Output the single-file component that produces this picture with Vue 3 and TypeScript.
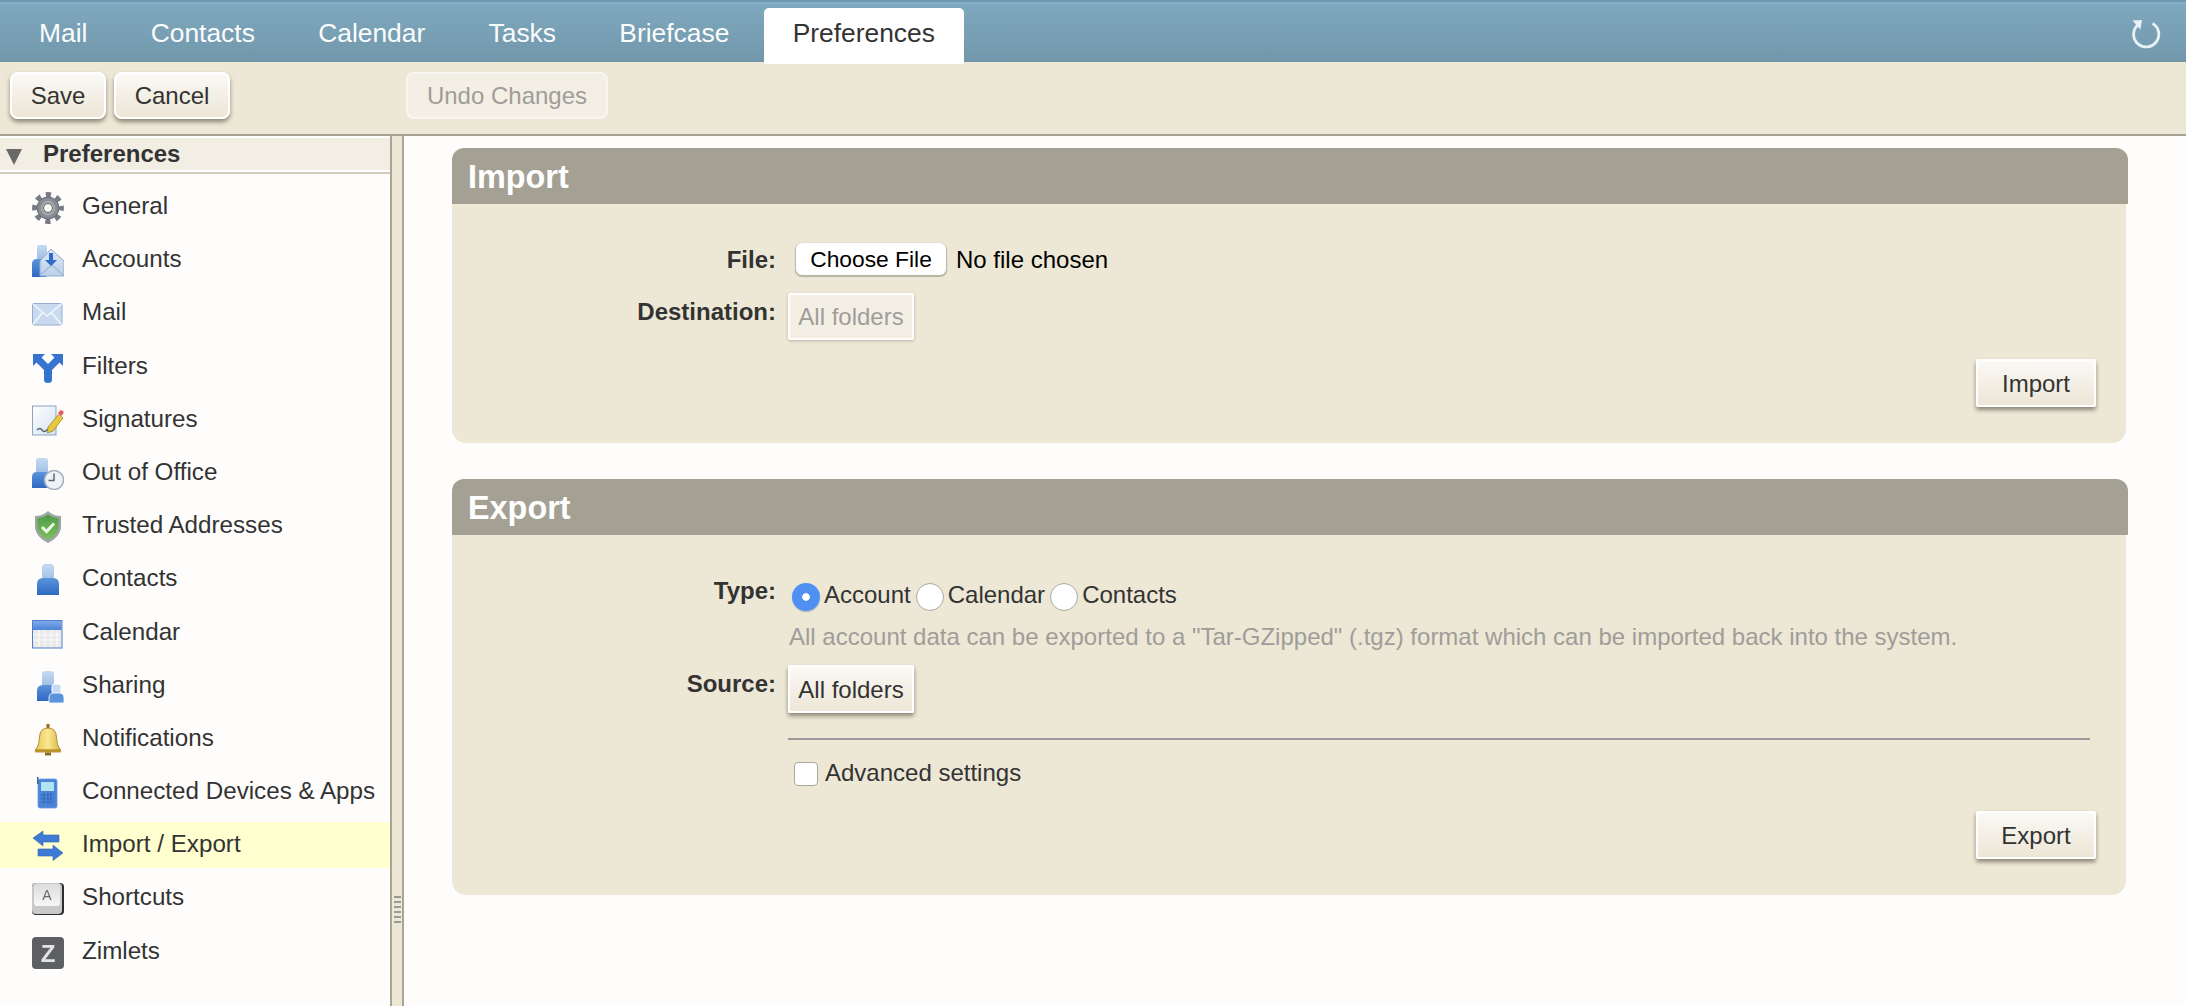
<script setup lang="ts">
const tabs: string[] = ['Mail', 'Contacts', 'Calendar', 'Tasks', 'Briefcase', 'Preferences']
const items: { key: string; label: string }[] = [
  { key: 'general', label: 'General' },
  { key: 'accounts', label: 'Accounts' },
  { key: 'mail', label: 'Mail' },
  { key: 'filters', label: 'Filters' },
  { key: 'signatures', label: 'Signatures' },
  { key: 'ooo', label: 'Out of Office' },
  { key: 'trusted', label: 'Trusted Addresses' },
  { key: 'contacts', label: 'Contacts' },
  { key: 'calendar', label: 'Calendar' },
  { key: 'sharing', label: 'Sharing' },
  { key: 'notifications', label: 'Notifications' },
  { key: 'devices', label: 'Connected Devices & Apps' },
  { key: 'importexport', label: 'Import / Export' },
  { key: 'shortcuts', label: 'Shortcuts' },
  { key: 'zimlets', label: 'Zimlets' },
]
</script>

<template>
  <div class="app">
    <svg class="defs" width="0" height="0" aria-hidden="true">
      <defs>
        <linearGradient id="gBody" x1="0" y1="0" x2="0" y2="1"><stop offset="0" stop-color="#5c93dd" /><stop offset="1" stop-color="#2f69c0" /></linearGradient>
        <linearGradient id="gHead" x1="0" y1="0" x2="0" y2="1"><stop offset="0" stop-color="#c6daf2" /><stop offset="1" stop-color="#9dbde6" /></linearGradient>
        <linearGradient id="gEnv" x1="0" y1="0" x2="0" y2="1"><stop offset="0" stop-color="#dfe9f6" /><stop offset="1" stop-color="#bcd0ea" /></linearGradient>
        <linearGradient id="gShield" x1="0" y1="0" x2="0" y2="1"><stop offset="0" stop-color="#4f9b46" /><stop offset="1" stop-color="#7cc05e" /></linearGradient>
        <linearGradient id="gBell" x1="0" y1="0" x2="1" y2="0"><stop offset="0" stop-color="#e9c65a" /><stop offset=".5" stop-color="#fbe88e" /><stop offset="1" stop-color="#d9b046" /></linearGradient>
        <linearGradient id="gKey" x1="0" y1="0" x2="0" y2="1"><stop offset="0" stop-color="#dcdcdc" /><stop offset="1" stop-color="#f7f7f7" /></linearGradient>
        <linearGradient id="gPage" x1="0" y1="0" x2="1" y2="1"><stop offset="0" stop-color="#ffffff" /><stop offset="1" stop-color="#d3e1f3" /></linearGradient>
        <linearGradient id="gCal" x1="0" y1="0" x2="0" y2="1"><stop offset="0" stop-color="#7fa9ea" /><stop offset="1" stop-color="#4d82d6" /></linearGradient>
      </defs>
    </svg>

    <header class="topbar">
      <nav class="tabs">
        <div v-for="t in tabs" :key="t" class="tab" :class="{ active: t === 'Preferences' }">{{ t }}</div>
      </nav>
      <svg class="refresh" width="32" height="32" viewBox="0 0 32 32" fill="none">
        <path d="M8.5 8.2 A12.6 12.6 0 1 0 23.5 6.4" stroke="#e8f1f5" stroke-width="2.8" />
        <path d="M3.5 3.5 L13 3 L11.4 12.5 Z" fill="#e8f1f5" />
      </svg>
    </header>

    <div class="toolbar">
      <div class="toolbar-left">
        <button class="btn round">Save</button>
        <button class="btn round cancel">Cancel</button>
      </div>
      <button class="btn round undo" disabled>Undo Changes</button>
    </div>

    <div class="main">
      <aside class="sidebar">
        <div class="side-head">
          <span class="tri"></span>
          <span>Preferences</span>
        </div>
        <ul class="list">
          <li v-for="it in items" :key="it.key" class="row" :class="{ selected: it.key === 'importexport' }">
            <svg class="ico" width="32" height="32" viewBox="0 0 32 32">
              <g v-if="it.key === 'general'">
                <circle cx="16" cy="16" r="13.2" fill="none" stroke="#777c82" stroke-width="5.4" stroke-dasharray="5.2 5.17" stroke-dashoffset="2.6" />
                <circle cx="16" cy="16" r="11" fill="#878c92" stroke="#6a6f75" />
                <circle cx="16" cy="16" r="7.5" fill="#a3a7ac" />
                <circle cx="16" cy="16" r="4.4" fill="#fdfdfb" stroke="#666" />
              </g>
              <g v-else-if="it.key === 'accounts'">
                <rect x="5" y="0" width="10" height="15" rx="2" fill="url(#gHead)" />
                <path d="M0 32 V19 Q0 14 5 14 H14 V32 Z" fill="url(#gBody)" />
                <path d="M8 31 V16 L19 4 L32 16 V31 Z" fill="url(#gEnv)" stroke="#8eaacd" stroke-width="1" />
                <path d="M8 30 L20 20 L31 30" fill="none" stroke="#9fb8d8" stroke-width="1.2" />
                <path d="M17 8 H21 V15 H25 L19 21 L13 15 H17 Z" fill="#2f6cc8" />
              </g>
              <g v-else-if="it.key === 'mail'">
                <rect x="0.5" y="5.5" width="29.5" height="21.5" rx="1.5" fill="#c9daf0" stroke="#93aece" />
                <path d="M1 6 L15 18 L29.5 6 M1 26.5 L11 14 M29.5 26.5 L19 14" fill="none" stroke="#f2f6fb" stroke-width="1.6" />
              </g>
              <g v-else-if="it.key === 'filters'">
                <path d="M1 2 H13 L9.5 5.5 L16 12 L22.5 5.5 L19 2 H31 V14 L27.5 10.5 L20 18 V28 Q20 31 16 31 Q12 31 12 28 V18 L4.5 10.5 L1 14 Z" fill="#3674d2" />
              </g>
              <g v-else-if="it.key === 'signatures'">
                <rect x="0.5" y="1" width="23.5" height="29" fill="url(#gPage)" stroke="#8ea3bf" />
                <path d="M5 25 Q8 22 10 25 T15 25 T19 25" fill="none" stroke="#58636f" stroke-width="1.4" />
                <path d="M16 22 L27 9 L31 13 L21 26 L15.5 28 Z" fill="#e7c83c" stroke="#8e7a25" stroke-width=".7" />
                <path d="M26 8 L28 5.5 Q30 4.5 31.5 6.5 Q32 8.5 30 10 L29 12 Z" fill="#e45a5a" stroke="#e8b0b0" stroke-width=".8" />
              </g>
              <g v-else-if="it.key === 'ooo'">
                <rect x="4" y="0" width="12" height="16" rx="2.5" fill="url(#gHead)" />
                <path d="M0 30 V19 Q0 14 5 14 H18 V30 Z" fill="url(#gBody)" />
                <circle cx="22" cy="22" r="9.5" fill="#eef1f5" stroke="#a3b1c2" stroke-width="1.6" />
                <path d="M22 15.5 V22.5 H16.5" fill="none" stroke="#5d6772" stroke-width="1.5" />
              </g>
              <g v-else-if="it.key === 'trusted'">
                <path d="M16 0 Q21 5 29 5 V17 Q28 26 16 32 Q4 26 3 17 V5 Q11 5 16 0 Z" fill="#9ea5a2" />
                <path d="M16 3.5 Q21 7 26.5 7.5 V17 Q25 24 16 28.5 Q7 24 5.5 17 V7.5 Q11 7 16 3.5 Z" fill="url(#gShield)" />
                <path d="M10 16 L14.5 20.5 L22 12.5" fill="none" stroke="#eef6ea" stroke-width="3" />
              </g>
              <g v-else-if="it.key === 'contacts'">
                <rect x="10.5" y="0.5" width="11" height="16" rx="3" fill="url(#gHead)" stroke="#9db8dc" stroke-width=".6" />
                <path d="M5 31 V20 Q5 14 11 14 H21 Q27 14 27 20 V31 Z" fill="url(#gBody)" />
              </g>
              <g v-else-if="it.key === 'calendar'">
                <rect x="0.5" y="2.5" width="29.5" height="27.5" fill="#e9e9e9" stroke="#4a7ed0" />
                <rect x="1" y="3" width="28.5" height="9" fill="url(#gCal)" />
                <path d="M7 12 V29 M13 12 V29 M19 12 V29 M25 12 V29 M1 17 H29 M1 22 H29" stroke="#fbfbfb" stroke-width="1.1" />
              </g>
              <g v-else-if="it.key === 'sharing'">
                <rect x="10" y="0" width="12" height="16" rx="3" fill="url(#gHead)" />
                <path d="M5 30 V20 Q5 14 11 14 H21 Q27 14 27 20 V30 Z" fill="url(#gBody)" />
                <rect x="20" y="13" width="9" height="10" rx="2.5" fill="#c6daf2" stroke="#fff" />
                <path d="M17 32 V27 Q17 22 22 22 H27 Q32 22 32 27 V32 Z" fill="#5c93dd" stroke="#fff" stroke-width=".8" />
              </g>
              <g v-else-if="it.key === 'notifications'">
                <rect x="14.5" y="0" width="3" height="5" fill="#8a6c1e" />
                <path d="M16 4 Q24 4 24.5 13 Q25 23 29 26 H3 Q7 23 7.5 13 Q8 4 16 4 Z" fill="url(#gBell)" stroke="#b28f35" />
                <rect x="3" y="25.5" width="26" height="3" rx="1" fill="#b9952f" />
                <rect x="13" y="28.5" width="6" height="3" fill="#8a6c1e" />
              </g>
              <g v-else-if="it.key === 'devices'">
                <rect x="6" y="2" width="19" height="29" rx="2" fill="#4a84d8" stroke="#6e9be0" stroke-width=".8" />
                <rect x="5" y="0" width="1.5" height="7" fill="#3c5f90" />
                <rect x="9" y="5" width="13" height="9" fill="#aee4f3" />
                <path d="M9 18 H22 M9 21.5 H22 M9 25 H22 M12 16 V28 M16 16 V28 M19 16 V28" stroke="#2e5ea8" stroke-width="1.2" stroke-dasharray="1.6 1.4" />
              </g>
              <g v-else-if="it.key === 'importexport'">
                <path d="M1 8 L11 1 V5 H27 V12 H11 V16 Z" fill="#3f7ad4" stroke="#2d63b6" stroke-width=".6" />
                <path d="M31 23 L21 30.5 V26 H6 V19 H21 V15 Z" fill="#3f7ad4" stroke="#2d63b6" stroke-width=".6" />
              </g>
              <g v-else-if="it.key === 'shortcuts'">
                <rect x="0" y="0" width="32" height="32" rx="4" fill="#2d2d2d" />
                <rect x="0" y="0" width="30" height="31" rx="4" fill="#c9c9c9" />
                <rect x="2" y="1" width="26" height="22" rx="3" fill="url(#gKey)" />
                <text x="15" y="17" font-size="14" text-anchor="middle" fill="#6a6a6a" class="glyph">A</text>
              </g>
              <g v-else-if="it.key === 'zimlets'">
                <rect x="0" y="0" width="32" height="32" rx="4" fill="#5e5f62" />
                <text x="16" y="25" font-size="24" font-weight="700" text-anchor="middle" fill="#e3e3e3" class="glyph">Z</text>
              </g>
            </svg>
            <span class="label">{{ it.label }}</span>
          </li>
        </ul>
      </aside>

      <div class="sash"><span class="grip"></span></div>

      <section class="content">
        <article class="panel import">
          <h2 class="panel-head">Import</h2>
          <div class="panel-body">
            <div class="form">
              <div class="flabel file-l">File:</div>
              <div class="field file">
                <button class="choose">Choose File</button>
                <span class="nofile">No file chosen</span>
              </div>
              <div class="flabel dest-l">Destination:</div>
              <div class="field">
                <button class="btn square off" disabled>All folders</button>
              </div>
            </div>
            <div class="actions"><button class="btn square act">Import</button></div>
          </div>
        </article>

        <article class="panel export">
          <h2 class="panel-head">Export</h2>
          <div class="panel-body">
            <div class="form">
              <div class="flabel type-l">Type:</div>
              <div class="field radios">
                <label class="opt"><input type="radio" name="type" checked /><span>Account</span></label>
                <label class="opt"><input type="radio" name="type" /><span>Calendar</span></label>
                <label class="opt"><input type="radio" name="type" /><span>Contacts</span></label>
              </div>
              <div></div>
              <div class="hint">All account data can be exported to a "Tar-GZipped" (.tgz) format which can be imported back into the system.</div>
              <div class="flabel src-l">Source:</div>
              <div class="field">
                <button class="btn square">All folders</button>
              </div>
              <div></div>
              <div class="sep"></div>
              <div></div>
              <label class="opt adv"><input type="checkbox" /><span>Advanced settings</span></label>
            </div>
            <div class="actions"><button class="btn square act">Export</button></div>
          </div>
        </article>
      </section>
    </div>
  </div>
</template>

<style>
html, body { margin: 0; padding: 0; background: #fefdfb; }
</style>

<style scoped>
.app {
  width: 2186px;
  height: 1006px;
  overflow: hidden;
  display: flex;
  flex-direction: column;
  font-family: "Liberation Sans", Arial, sans-serif;
  font-size: 24px;
  color: #333;
  background: #fefdfb;
}
.defs { position: absolute; }

.topbar {
  height: 62px;
  box-sizing: border-box;
  flex: none;
  display: flex;
  justify-content: space-between;
  align-items: flex-start;
  padding: 0 25px 0 10px;
  border-top: 2px solid #6b98b2;
  box-shadow: inset 0 2px 0 #88adc2;
  background: linear-gradient(#7fa9bf, #7297ab);
  position: relative;
  z-index: 1;
}
.tabs { display: flex; gap: 5.3px; margin-top: 6px; }
.tab {
  height: 56px;
  box-sizing: border-box;
  padding: 0 29px;
  font-size: 26.4px;
  line-height: 50px;
  color: #fbfcfc;
  border-radius: 5px 5px 0 0;
}
.tab.active { background: #fff; color: #333; }
.refresh { margin-top: 15px; }

.toolbar {
  height: 72px;
  box-sizing: border-box;
  flex: none;
  display: flex;
  padding: 10px 0 0 10px;
  background: #ede7d5;
}
.toolbar-left { width: 396px; display: flex; gap: 8px; }
.btn {
  font: inherit;
  color: #333;
  box-sizing: border-box;
  border: 2px solid #fff;
  background: linear-gradient(#fbf9f5, #ece6d6);
  box-shadow: 0 3px 4px rgba(60, 55, 45, 0.55);
  padding: 1px 0 0;
  height: 47px;
}
.btn.round { border-radius: 8px; width: 96px; }
.btn.round.cancel { width: 116px; }
.btn.round.undo {
  width: 202px;
  background: #f3efe5;
  color: #9f9d99;
  box-shadow: none;
  border-color: #f8f6f0;
}
.btn.square { border-radius: 2px; width: 126px; height: 48px; }
.btn.square.off {
  background: #f3efe5;
  color: #9f9d99;
  height: 47px;
  box-shadow: 0 1px 3px rgba(60, 55, 45, 0.3);
}
.btn.square.act { width: 120px; height: 48px; }

.main {
  flex: 1;
  display: flex;
  min-height: 0;
  border-top: 2px solid #a5a193;
}
.sidebar {
  width: 392px;
  box-sizing: border-box;
  flex: none;
  border-right: 2px solid #a9a494;
  background: #fefdfb;
}
.side-head {
  height: 36px;
  box-sizing: border-box;
  display: flex;
  align-items: center;
  border-top: 2px solid #fff;
  border-bottom: 2px solid #fff;
  box-shadow: 0 2px 0 #d2ccbd;
  background: #f2eee3;
  font-weight: 700;
  padding: 0 0 0 6px;
}
.tri {
  width: 0;
  height: 0;
  border-left: 8px solid transparent;
  border-right: 8px solid transparent;
  border-top: 16px solid #696969;
  margin: 6px 21px 0 0;
}
.list {
  list-style: none;
  margin: 0;
  padding: 12px 0 0;
  display: flex;
  flex-direction: column;
  gap: 7.2px;
}
.row {
  height: 46px;
  display: flex;
  align-items: center;
  padding-left: 32px;
}
.row.selected { background: #ffffcf; }
.ico { flex: none; margin-top: 2px; filter: blur(0.4px); }
.glyph { font-family: "Liberation Sans", Arial, sans-serif; }
.label { margin-left: 18px; margin-bottom: 2px; white-space: nowrap; font-size: 24.2px; }

.sash {
  width: 10px;
  flex: none;
  background: #ede7d5;
  border-right: 2px solid #a9a494;
  display: flex;
  justify-content: center;
  align-items: flex-start;
  box-sizing: content-box;
}
.grip {
  width: 7px;
  height: 27px;
  margin-top: 760px;
  background: repeating-linear-gradient(#9a9a94 0 2px, transparent 2px 5px);
}

.content {
  flex: 1;
  padding: 12px 60px 0 48px;
  background: #fefdfb;
  display: flex;
  flex-direction: column;
  gap: 36px;
}
.panel-head {
  margin: 0 -2px 0 0;
  height: 56px;
  box-sizing: border-box;
  background: #a4a194;
  color: #fff;
  font-size: 32.4px;
  font-weight: 700;
  line-height: 58px;
  padding-left: 16px;
  border-radius: 12px 12px 0 0;
}
.panel-body {
  background: #ede7d5;
  border-radius: 0 0 14px 14px;
  padding-right: 30px;
}
.import .panel-body { padding-top: 39px; padding-bottom: 36px; }
.export .panel-body { padding-top: 48px; padding-bottom: 36px; }

.form {
  display: grid;
  grid-template-columns: 324px 1fr;
  column-gap: 12px;
}
.flabel {
  text-align: right;
  font-weight: 700;
  line-height: 28px;
}
.file-l { line-height: 32px; padding-top: 1px; }
.dest-l { margin-top: 22px; }
.type-l { margin-top: -6px; }
.src-l { margin-top: 5px; }
.field.file {
  display: flex;
  align-items: center;
  margin-left: 8px;
  height: 32px;
}
.import .form .field:last-child { margin-top: 17px; }
.choose {
  width: 150px;
  height: 32px;
  box-sizing: border-box;
  font-family: "Liberation Sans", Arial, sans-serif;
  font-size: 22.8px;
  color: #000;
  background: #fff;
  border: 0;
  border-radius: 6px;
  box-shadow: 0 1px 1px 1px rgba(120, 115, 100, 0.45);
  padding: 1px 0 0;
}
.nofile { margin-left: 10px; color: #000; padding-top: 1px; }
.actions { display: flex; justify-content: flex-end; }
.import .actions { margin-top: 19px; }
.export .actions { margin-top: 25px; }

.radios { display: flex; height: 28px; margin-left: 4px; gap: 0; }
.opt {
  display: flex;
  align-items: center;
  line-height: 28px;
  height: 28px;
}
.opt input {
  appearance: none;
  margin: 0 4px 0 0;
  width: 28px;
  height: 28px;
  box-sizing: border-box;
  background: #fff;
  border: 1px solid #a9a79f;
  border-radius: 50%;
  flex: none;
}
.opt input:checked {
  border: 0;
  background: radial-gradient(circle, #fff 0 3.4px, #4f90f2 4.2px);
  box-shadow: 0 1px 1px rgba(60, 80, 130, 0.35);
}
.opt + .opt input { margin-left: 5px; }
.opt input + span { position: relative; top: -2px; }
.hint { color: #9f9d99; margin: 12px 0 14px 1px; line-height: 28px; white-space: nowrap; }
.sep {
  height: 2px;
  margin-top: 25px;
  margin-right: 6px;
  background: #9a9a9c;
}
.adv { margin: 22px 0 0 6px; height: 24px; }
.adv input {
  width: 24px;
  height: 24px;
  border-radius: 4px;
  margin-right: 7px;
}
.adv input + span { top: -1px; }
</style>
